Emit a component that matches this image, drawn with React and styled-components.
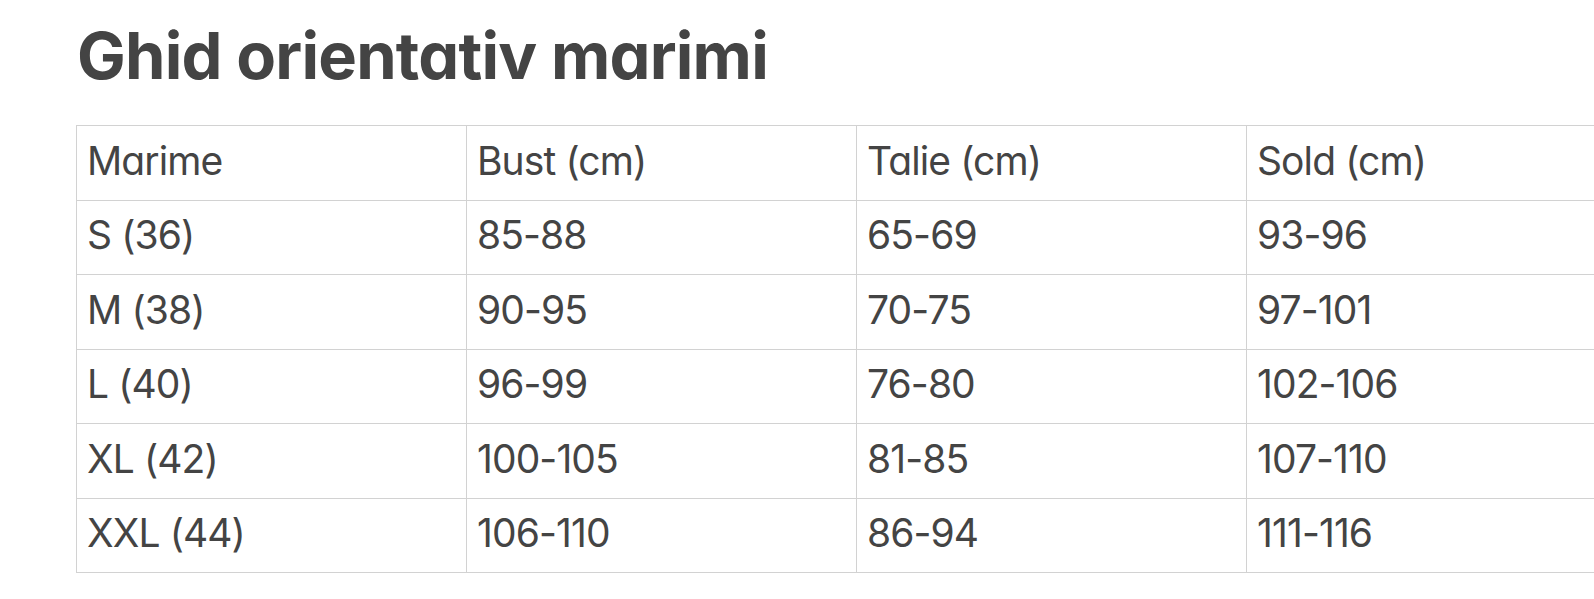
import React from 'react';
import styled, { createGlobalStyle } from 'styled-components';

const GlobalStyle = createGlobalStyle`
    body {
        margin: 0;
        background: #fff;
        overflow: hidden;
        font-family: Inter, "Liberation Sans", sans-serif;
        color: #444;
    }
`;

const Page = styled.div`
    padding: 23px 0 0 76px;
    width: 1700px;
`;

const Title = styled.h1`
    margin: 0 0 37px 1px;
    font-size: 65px;
    line-height: 1;
    font-weight: 700;
    letter-spacing: -0.8px;
    font-feature-settings: 'cv11';
    color: #444;
`;

const Table = styled.table`
    border-collapse: collapse;
    table-layout: fixed;
    width: 1561px;
`;

const Row = styled.tr`
    height: 74.5px;
`;

const Cell = styled.td`
    width: 379px;
    padding: 0 0 5px 10px;
    border: 1px solid #d2d2d2;
    font-size: 39px;
    line-height: 1;
    font-weight: 400;
    font-feature-settings: 'cv11';
    letter-spacing: -0.9px;
    color: #444;
    text-align: left;
    vertical-align: middle;
`;

const header = ['Marime', 'Bust (cm)', 'Talie (cm)', 'Sold (cm)'];

const rows = [
    ['S (36)', '85-88', '65-69', '93-96'],
    ['M (38)', '90-95', '70-75', '97-101'],
    ['L (40)', '96-99', '76-80', '102-106'],
    ['XL (42)', '100-105', '81-85', '107-110'],
    ['XXL (44)', '106-110', '86-94', '111-116'],
];

function App() {
    return (
        <Page>
            <GlobalStyle />
            <Title>Ghid orientativ marimi</Title>
            <Table>
                <tbody>
                    <Row>
                        {header.map((h) => (
                            <Cell key={h}>{h}</Cell>
                        ))}
                    </Row>
                    {rows.map((r) => (
                        <Row key={r[0]}>
                            {r.map((c, i) => (
                                <Cell key={i}>{c}</Cell>
                            ))}
                        </Row>
                    ))}
                </tbody>
            </Table>
        </Page>
    );
}

export default App;
